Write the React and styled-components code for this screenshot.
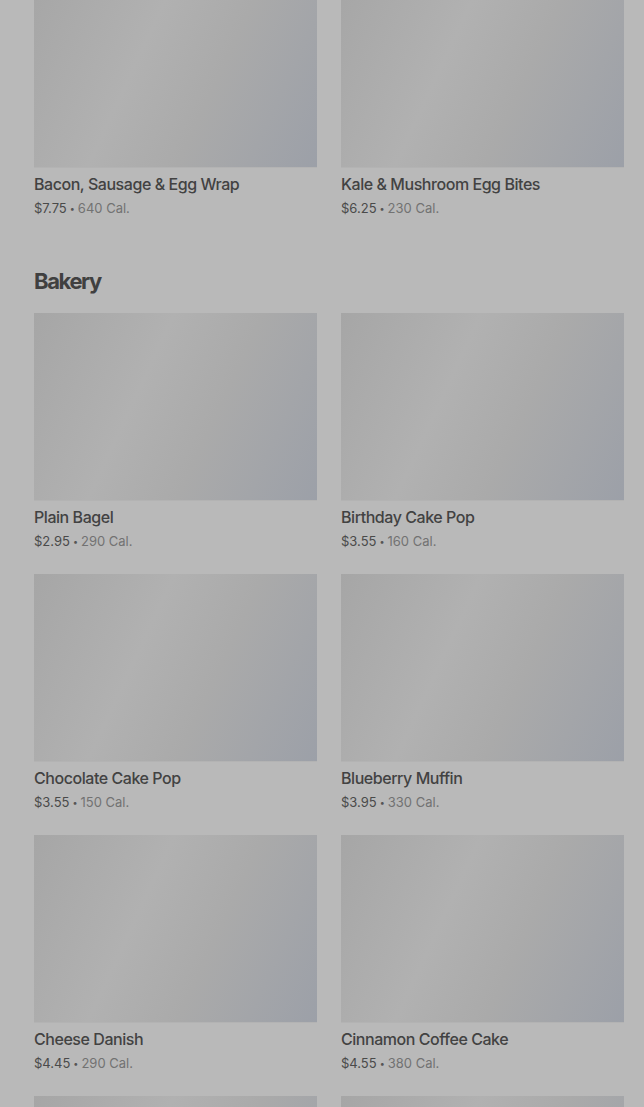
import React from "react";
import styled, { createGlobalStyle } from "styled-components";

const GlobalStyle = createGlobalStyle`
  html,
  body {
    margin: 0;
    padding: 0;
    overflow: hidden;
    background: #b9b9b9;
  }

  body {
    font-family: "Inter", "Roboto", sans-serif;
    -webkit-font-smoothing: antialiased;
  }
`;

const Page = styled.main`
  padding: 0 20px 0 34px;
  margin-top: -20px;
`;

const Section = styled.section`
  & + & {
    margin-top: 49px;
  }
`;

const Heading = styled.h2`
  margin: 0 0 18px;
  font-size: 22px;
  line-height: 28px;
  font-weight: 700;
  letter-spacing: -1.4px;
  color: #404040;
`;

const Grid = styled.div`
  display: grid;
  grid-template-columns: repeat(2, 1fr);
  column-gap: 24px;
  row-gap: 23px;
`;

const Item = styled.article`
  display: flex;
  flex-direction: column;
`;

const Thumb = styled.div`
  height: 188px;
  background: linear-gradient(
    115deg,
    #a6a6a6 0%,
    #b1b1b1 38%,
    #aaaaaa 62%,
    #9ca0a8 100%
  );
  border-bottom: 1px solid #b3b3b3;
  box-sizing: border-box;
`;

const Info = styled.div`
  padding-top: 5px;
`;

const Name = styled.h3`
  margin: 0;
  font-size: 16px;
  line-height: 22px;
  font-weight: 500;
  letter-spacing: -0.45px;
  color: #424242;
`;

const Meta = styled.p`
  display: flex;
  align-items: center;
  margin: 3px 0 0;
  height: 20px;
  font-size: 13px;
  line-height: 20px;
  color: #727272;

  b {
    font-weight: 400;
    color: #4a4a4a;
  }

  span {
    margin: 0 3px;
    font-size: 9px;
    line-height: 1;
    color: #555;
  }
`;

const sections = [
  {
    items: [
      { name: "Bacon, Sausage & Egg Wrap", price: "7.75", cal: 640 },
      { name: "Kale & Mushroom Egg Bites", price: "6.25", cal: 230 },
    ],
  },
  {
    title: "Bakery",
    items: [
      { name: "Plain Bagel", price: "2.95", cal: 290 },
      { name: "Birthday Cake Pop", price: "3.55", cal: 160 },
      { name: "Chocolate Cake Pop", price: "3.55", cal: 150 },
      { name: "Blueberry Muffin", price: "3.95", cal: 330 },
      { name: "Cheese Danish", price: "4.45", cal: 290 },
      { name: "Cinnamon Coffee Cake", price: "4.55", cal: 380 },
      { name: "Butter Croissant", price: "3.75", cal: 260 },
      { name: "Chocolate Croissant", price: "4.25", cal: 300 },
    ],
  },
];

const MenuItem = ({ name, price, cal }) => (
  <Item>
    <Thumb />
    <Info>
      <Name>{name}</Name>
      <Meta>
        <b>${price}</b>
        <span>•</span>
        {cal} Cal.
      </Meta>
    </Info>
  </Item>
);

const App = () => (
  <>
    <GlobalStyle />
    <Page>
      {sections.map((section, i) => (
        <Section key={i}>
          {section.title && <Heading>{section.title}</Heading>}
          <Grid>
            {section.items.map((item) => (
              <MenuItem key={item.name} {...item} />
            ))}
          </Grid>
        </Section>
      ))}
    </Page>
  </>
);

export default App;
